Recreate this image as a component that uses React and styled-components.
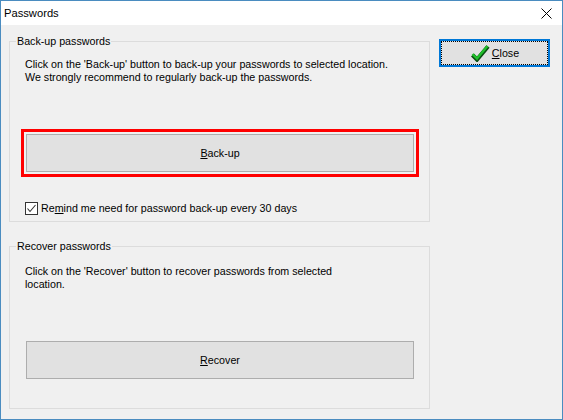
import React from 'react'
import styled, { createGlobalStyle } from 'styled-components'

const Global = createGlobalStyle`
  body { margin: 0; background: #fff; }
`

const Window = styled.div`
  width: 563px;
  height: 420px;
  box-sizing: border-box;
  border: 1px solid #4a8cc0;
  background: #f0f0f0;
  display: flex;
  flex-direction: column;
  font-family: "Liberation Sans", Arial, sans-serif;
  font-size: 10.7px;
  color: #000;
`
const TitleBar = styled.div`
  height: 24px;
  background: #fff;
  display: flex;
  align-items: center;
  justify-content: space-between;
  padding: 0 10px 0 3px;
  flex-shrink: 0;
`
const Title = styled.span`
  font-size: 11.2px;
`
const Body = styled.div`
  display: flex;
  gap: 9px;
  padding: 10px 12px 0 8px;
`
const LeftCol = styled.div`
  width: 421px;
  display: flex;
  flex-direction: column;
  gap: 18px;
`
const Group = styled.fieldset`
  margin: 0;
  padding: 0 0 ${p => p.$bottom}px 0;
  border: 1px solid #dcdcdc;
  min-width: 0;
  display: flex;
  flex-direction: column;
`
const Legend = styled.legend`
  margin-left: 6px;
  padding: 0 1px;
  line-height: 13px;
`
const Text = styled.p`
  margin: ${p => p.$top}px 0 0 15px;
  line-height: 13px;
  white-space: nowrap;
`
const Highlight = styled.div`
  margin: 45px 0 0 11px;
  width: fit-content;
  border: 3px solid #ff0000;
  padding: 2px;
`
const WideButton = styled.button`
  display: block;
  width: 388px;
  height: 38px;
  margin: ${p => p.$top || 0}px 0 0 ${p => p.$left || 0}px;
  box-sizing: border-box;
  border: 1px solid #adadad;
  background: #e1e1e1;
  font: inherit;
  color: #000;
  padding: 0;
`
const CheckRow = styled.label`
  display: flex;
  align-items: center;
  gap: 3px;
  margin: 25px 0 0 15px;
  line-height: 13px;
`
const Box = styled.span`
  width: 13px;
  height: 13px;
  box-sizing: border-box;
  border: 1px solid #333;
  background: #fff;
  display: flex;
  align-items: center;
  justify-content: center;
`
const RightCol = styled.div`
  padding-top: 4px;
`
const CloseButton = styled.button`
  width: 111px;
  height: 28px;
  box-sizing: border-box;
  border: 2px solid #0078d7;
  background: #e1e1e1;
  padding: 0;
  font: inherit;
  color: #000;
`
const Focus = styled.span`
  display: flex;
  align-items: center;
  justify-content: center;
  gap: 2px;
  height: 100%;
  box-sizing: border-box;
  border: 1px dotted #000;
`

const CheckIcon = () => (
  <svg width="20" height="18" viewBox="0 0 20 18">
    <polyline points="2.5,11 7,15.5 18,2.5" fill="none" stroke="#0b4d12" strokeWidth="4.2" strokeLinejoin="miter" />
    <polyline points="2.5,10.2 7,14.5 17.5,2" fill="none" stroke="#1fbf2a" strokeWidth="2.4" strokeLinejoin="miter" />
  </svg>
)

export default function App() {
  return (
    <>
      <Global />
      <Window>
        <TitleBar>
          <Title>Passwords</Title>
          <svg width="11" height="11" viewBox="0 0 11 11">
            <path d="M0.5 0.5 L10.5 10.5 M10.5 0.5 L0.5 10.5" stroke="#000" strokeWidth="1" />
          </svg>
        </TitleBar>
        <Body>
          <LeftCol>
            <Group $bottom={6}>
              <Legend>Back-up passwords</Legend>
              <Text $top={10}>
                Click on the 'Back-up' button to back-up your passwords to selected location.<br />
                We strongly recommend to regularly back-up the passwords.
              </Text>
              <Highlight>
                <WideButton><u>B</u>ack-up</WideButton>
              </Highlight>
              <CheckRow>
                <Box>
                  <svg width="11" height="11" viewBox="0 0 11 11">
                    <polyline points="1.5,5.5 4,8.5 9.5,2" fill="none" stroke="#333" strokeWidth="1.1" />
                  </svg>
                </Box>
                <span>Re<u>m</u>ind me need for password back-up every 30 days</span>
              </CheckRow>
            </Group>
            <Group $bottom={29}>
              <Legend>Recover passwords</Legend>
              <Text $top={12}>
                Click on the 'Recover' button to recover passwords from selected<br />
                location.
              </Text>
              <WideButton $top={50} $left={16}><u>R</u>ecover</WideButton>
            </Group>
          </LeftCol>
          <RightCol>
            <CloseButton>
              <Focus>
                <CheckIcon />
                <span><u>C</u>lose</span>
              </Focus>
            </CloseButton>
          </RightCol>
        </Body>
      </Window>
    </>
  )
}
